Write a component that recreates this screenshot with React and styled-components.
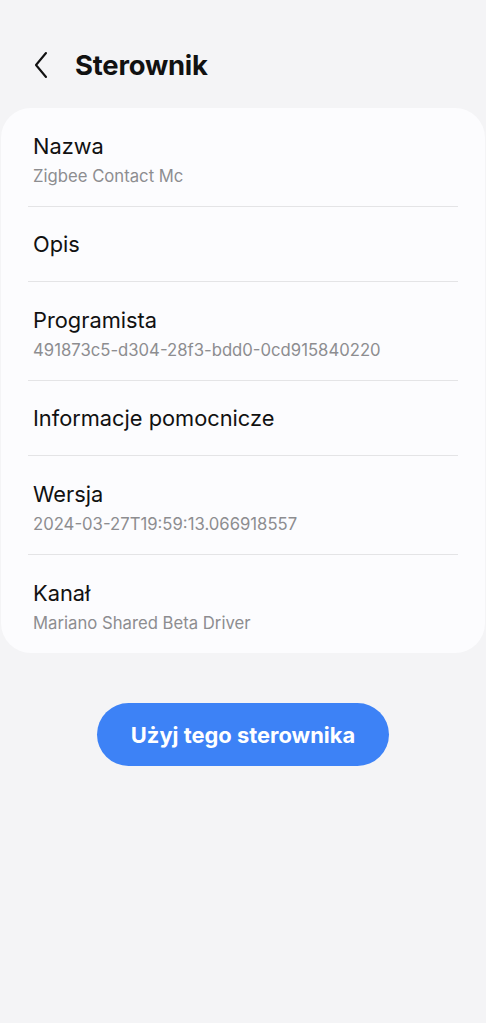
import React from "react";
import styled, { createGlobalStyle } from "styled-components";

const Global = createGlobalStyle`
  html, body { margin: 0; padding: 0; background: #f4f4f6; }
  body { font-family: Inter, "Noto Sans", sans-serif; -webkit-font-smoothing: antialiased; }
`;

const Page = styled.div`
  width: 486px;
  min-height: 1023px;
  background: #f4f4f6;
  display: flex;
  flex-direction: column;
  align-items: center;
`;

const Header = styled.header`
  align-self: stretch;
  height: 108px;
  box-sizing: border-box;
  padding: 22px 0 0 29px;
  display: flex;
  align-items: center;
  gap: 22px;
`;

const BackButton = styled.button`
  border: 0;
  background: none;
  padding: 0;
  width: 24px;
  height: 28px;
  display: flex;
  align-items: center;
  justify-content: center;
  color: #111;
`;

const Title = styled.h1`
  margin: 0;
  font-size: 27.4px;
  font-weight: 700;
  color: #111;
  letter-spacing: -0.2px;
`;

const Card = styled.section`
  align-self: stretch;
  margin: 0 1px;
  background: #fcfcfe;
  border-radius: 30px;
  display: flex;
  flex-direction: column;
`;

const Row = styled.div`
  margin: 0 27px;
  padding: ${(p) => (p.$sub ? "24px 5px 16px" : "23px 5px 23px")};
  display: flex;
  flex-direction: column;
  gap: 2px;
  border-bottom: ${(p) => (p.$last ? "none" : "1.5px solid #e4e4e6")};
`;

const Label = styled.div`
  font-size: 21.8px;
  color: #111;
  line-height: 28px;
`;

const Sub = styled.div`
  font-size: 16.7px;
  color: #8d8d90;
  line-height: 28px;
`;

const PrimaryButton = styled.button`
  margin-top: 50px;
  width: 292px;
  height: 63px;
  border: 0;
  border-radius: 32px;
  background: #3d82f6;
  color: #fff;
  font-family: inherit;
  font-size: 21.9px;
  font-weight: 700;
`;

const rows = [
  { label: "Nazwa", sub: "Zigbee Contact Mc" },
  { label: "Opis" },
  { label: "Programista", sub: "491873c5-d304-28f3-bdd0-0cd915840220" },
  { label: "Informacje pomocnicze" },
  { label: "Wersja", sub: "2024-03-27T19:59:13.066918557" },
  { label: "Kanał", sub: "Mariano Shared Beta Driver" },
];

export default function App() {
  return (
    <Page>
      <Global />
      <Header>
        <BackButton aria-label="Wstecz">
          <svg width="18" height="28" viewBox="0 0 18 28" fill="none">
            <path d="M14 2 L4 14 L14 26" stroke="#111" strokeWidth="2.1" strokeLinecap="round" strokeLinejoin="round" />
          </svg>
        </BackButton>
        <Title>Sterownik</Title>
      </Header>
      <Card>
        {rows.map((r, i) => (
          <Row key={r.label} $sub={!!r.sub} $last={i === rows.length - 1}>
            <Label>{r.label}</Label>
            {r.sub && <Sub>{r.sub}</Sub>}
          </Row>
        ))}
      </Card>
      <PrimaryButton>Użyj tego sterownika</PrimaryButton>
    </Page>
  );
}
